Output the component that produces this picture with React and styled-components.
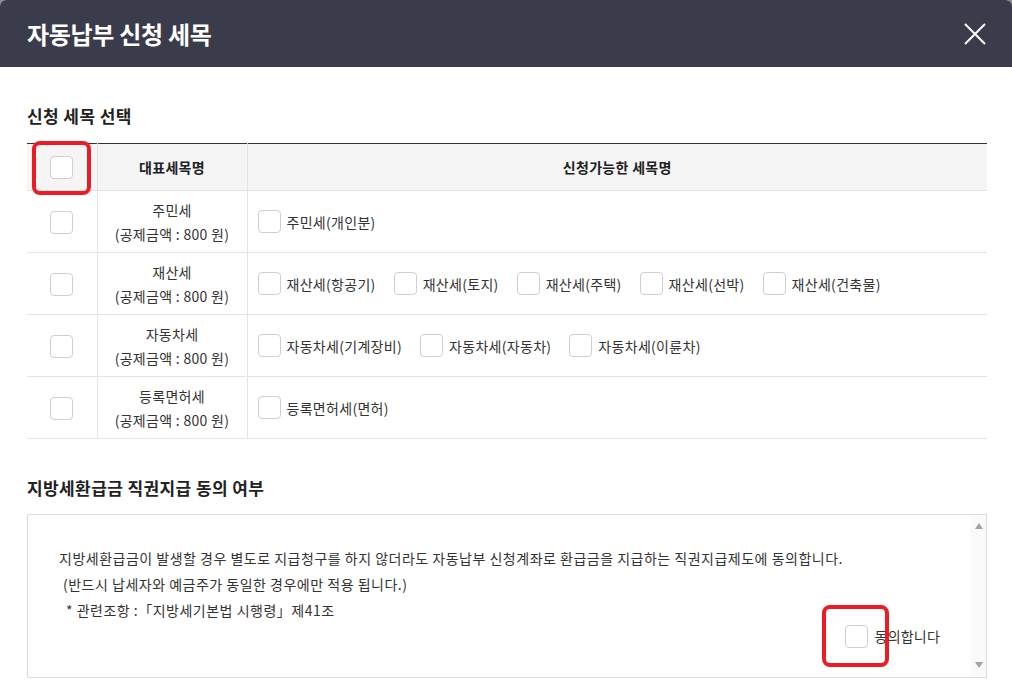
import React from "react";
import styled, { createGlobalStyle } from "styled-components";

const GlobalStyle = createGlobalStyle`
  html, body {
    margin: 0;
    padding: 0;
    background: #8a8a8a;
    overflow: hidden;
  }
  body {
    font-family: "Noto Sans CJK KR", "Noto Sans", sans-serif;
    color: #333;
  }
  * { box-sizing: border-box; }
`;

const Modal = styled.div`
  background: #fff;
  border-radius: 6px 6px 0 0;
  overflow: hidden;
  min-height: 694px;
`;

const Header = styled.header`
  height: 67px;
  background: #3b3c4b;
  display: flex;
  align-items: center;
  justify-content: space-between;
  padding: 0 25px 0 27px;
`;

const Title = styled.h1`
  margin: 0;
  font-size: 24px;
  font-weight: 700;
  color: #fff;
  letter-spacing: -0.3px;
  line-height: 30px;
`;

const CloseButton = styled.button`
  width: 24px;
  height: 24px;
  padding: 0;
  border: 0;
  background: transparent;
  display: flex;
  align-items: center;
  justify-content: center;
  cursor: pointer;
`;

const Body = styled.div`
  padding: 0 25px 0 27px;
`;

const SectionTitle = styled.h2`
  margin: ${(p) => p.$top}px 0 ${(p) => p.$bottom}px;
  font-size: 17px;
  font-weight: 700;
  color: #222;
  line-height: 24px;
  letter-spacing: 0.4px;
`;

const Table = styled.table`
  width: 100%;
  border-collapse: collapse;
  table-layout: fixed;
  border-top: 1px solid #333;
  font-size: 14px;
  letter-spacing: 0.3px;
`;

const Th = styled.th`
  height: 47px;
  background: #f5f5f5;
  font-weight: 700;
  color: #222;
  text-align: center;
  border-bottom: 1px solid #e4e4e4;
  border-left: ${(p) => (p.$first ? "0" : "1px solid #e4e4e4")};
  padding: 0;
  vertical-align: middle;
`;

const Td = styled.td`
  height: 62px;
  border-bottom: 1px solid #e4e4e4;
  border-left: ${(p) => (p.$first ? "0" : "1px solid #e4e4e4")};
  padding: 0 ${(p) => (p.$left ? "10px" : "0")};
  text-align: ${(p) => (p.$left ? "left" : "center")};
  vertical-align: middle;
  color: #333;
  line-height: 24px;
`;

const CheckWrap = styled.span`
  position: relative;
  display: inline-flex;
  vertical-align: middle;
`;

const Checkbox = styled.input.attrs({ type: "checkbox" })`
  appearance: none;
  -webkit-appearance: none;
  width: 23px;
  height: 23px;
  margin: 0;
  border: 1px solid #cfcfcf;
  border-radius: 4px;
  background: #fff;
  cursor: pointer;
`;

const Highlight = styled.span`
  position: absolute;
  left: ${(p) => p.$l}px;
  top: ${(p) => p.$t}px;
  width: ${(p) => p.$w}px;
  height: ${(p) => p.$h}px;
  border: 4px solid #ed1c24;
  border-radius: 8px;
  pointer-events: none;
`;

const CheckList = styled.div`
  display: flex;
  flex-wrap: wrap;
  align-items: center;
`;

const CheckItem = styled.label`
  display: inline-flex;
  align-items: center;
  gap: 6px;
  margin-right: 18px;
  color: #333;
  cursor: pointer;
`;

const ConsentBox = styled.div`
  display: flex;
  height: 164px;
  border: 1px solid #dcdcdc;
`;

const ConsentText = styled.div`
  flex: 1;
  padding: 30px 31px 0 31px;
  font-size: 14px;
  letter-spacing: 0.5px;
  color: #333;
`;

const Line = styled.p`
  margin: 0;
  line-height: 26px;
  padding-left: ${(p) => p.$indent || 0}px;
`;

const AgreeRow = styled.div`
  display: flex;
  justify-content: flex-end;
  align-items: center;
  height: 26px;
  gap: 7px;
  letter-spacing: 0.2px;
`;

const ScrollTrack = styled.div`
  width: 15px;
  background: #fafafa;
  display: flex;
  flex-direction: column;
  justify-content: space-between;
  align-items: center;
  padding: 8px 0 9px;
`;

const Arrow = styled.span`
  width: 0;
  height: 0;
  border-left: 4px solid transparent;
  border-right: 4px solid transparent;
  ${(p) =>
    p.$down
      ? "border-top: 6px solid #a3a3a3;"
      : "border-bottom: 6px solid #a3a3a3;"}
`;

const rows = [
  { name: "주민세", items: ["주민세(개인분)"] },
  {
    name: "재산세",
    items: ["재산세(항공기)", "재산세(토지)", "재산세(주택)", "재산세(선박)", "재산세(건축물)"],
  },
  { name: "자동차세", items: ["자동차세(기계장비)", "자동차세(자동차)", "자동차세(이륜차)"] },
  { name: "등록면허세", items: ["등록면허세(면허)"] },
];

export default function App() {
  return (
    <>
      <GlobalStyle />
      <Modal>
        <Header>
          <Title>자동납부 신청 세목</Title>
          <CloseButton aria-label="닫기">
            <svg width="22" height="22" viewBox="0 0 22 22">
              <path d="M1 1 L21 21 M21 1 L1 21" stroke="#fff" strokeWidth="2" fill="none" />
            </svg>
          </CloseButton>
        </Header>
        <Body>
          <SectionTitle $top={37} $bottom={15}>신청 세목 선택</SectionTitle>
          <Table>
            <colgroup>
              <col style={{ width: 70 }} />
              <col style={{ width: 150 }} />
              <col />
            </colgroup>
            <thead>
              <tr>
                <Th $first>
                  <CheckWrap>
                    <Checkbox />
                    <Highlight $l={-18} $t={-15} $w={59} $h={54} />
                  </CheckWrap>
                </Th>
                <Th>대표세목명</Th>
                <Th>신청가능한 세목명</Th>
              </tr>
            </thead>
            <tbody>
              {rows.map((r) => (
                <tr key={r.name}>
                  <Td $first>
                    <CheckWrap>
                      <Checkbox />
                    </CheckWrap>
                  </Td>
                  <Td>
                    {r.name}
                    <br />
                    (공제금액 : 800 원)
                  </Td>
                  <Td $left>
                    <CheckList>
                      {r.items.map((it) => (
                        <CheckItem key={it}>
                          <Checkbox />
                          {it}
                        </CheckItem>
                      ))}
                    </CheckList>
                  </Td>
                </tr>
              ))}
            </tbody>
          </Table>
          <SectionTitle $top={37} $bottom={14}>지방세환급금 직권지급 동의 여부</SectionTitle>
          <ConsentBox>
            <ConsentText>
              <Line>
                지방세환급금이 발생할 경우 별도로 지급청구를 하지 않더라도 자동납부 신청계좌로 환급금을 지급하는 직권지급제도에 동의합니다.
              </Line>
              <Line $indent={4}>(반드시 납세자와 예금주가 동일한 경우에만 적용 됩니다.)</Line>
              <Line $indent={7}>* 관련조항 :「지방세기본법 시행령」제41조</Line>
              <AgreeRow>
                <CheckWrap>
                  <Checkbox />
                  <Highlight $l={-23} $t={-20} $w={67} $h={62} />
                </CheckWrap>
                <span>동의합니다</span>
              </AgreeRow>
            </ConsentText>
            <ScrollTrack>
              <Arrow />
              <Arrow $down />
            </ScrollTrack>
          </ConsentBox>
        </Body>
      </Modal>
    </>
  );
}
